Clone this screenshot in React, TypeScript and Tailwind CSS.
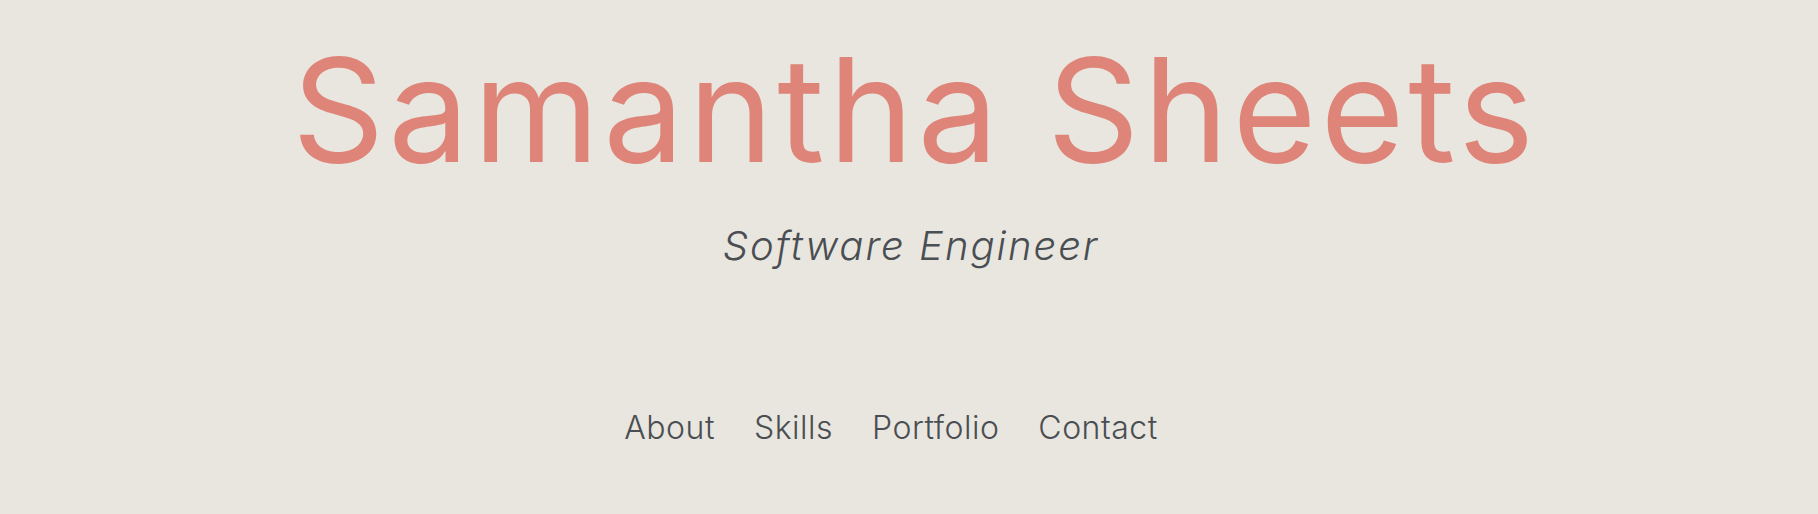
import React from "react";

export default function App() {
  return (
    <div className="min-h-[514px] w-full bg-[#e8e6de] flex flex-col items-center">
      <h1 className="mt-[38px] pl-[12px] text-[144px] leading-none font-normal text-[#de8478] tracking-[4px] [font-family:Inter,'Open_Sans',sans-serif]">
        Samantha Sheets
      </h1>
      <p className="mt-[44px] pl-[4px] text-[40px] leading-none italic font-light text-[#4a4e53] tracking-[2px] [font-family:Inter,'Open_Sans',sans-serif]">
        Software Engineer
      </p>
      <nav className="mt-[146px] pr-[36px] flex items-center gap-[39px] text-[32px] leading-none font-light text-[#4a4e53] tracking-[0.5px] [font-family:Inter,'Open_Sans',sans-serif]">
        <a href="#about">About</a>
        <a href="#skills">Skills</a>
        <a href="#portfolio">Portfolio</a>
        <a href="#contact">Contact</a>
      </nav>
    </div>
  );
}
